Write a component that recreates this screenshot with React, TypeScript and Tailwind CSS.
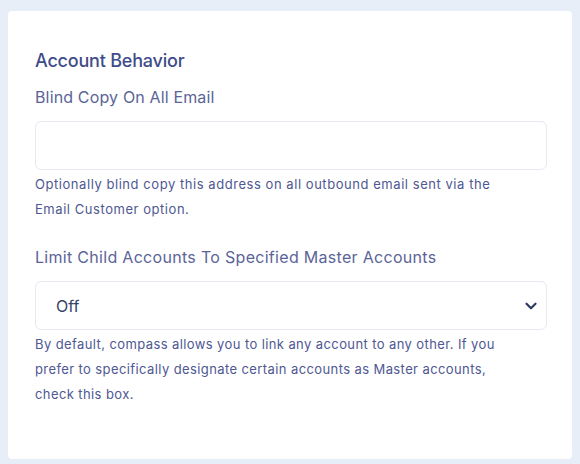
import { ChevronDown } from "lucide-react";

export default function App() {
  return (
    <div className="min-h-[464px] w-[580px] bg-[#e8eef7] px-2 pt-[11px] pb-[9px] font-[Inter,sans-serif]">
      <div className="rounded bg-white pl-[27px] pr-[25px] pt-[38px] pb-[52px]">
        <h2 className="text-[18px] leading-[24px] font-medium tracking-[-0.2px] text-[#404c8a]">Account Behavior</h2>

        {/* Blind copy */}
        <label className="mt-[13px] block text-[16px] leading-[22px] tracking-[0.15px] text-[#5b6497]">
          Blind Copy On All Email
        </label>
        <input
          type="text"
          className="mt-[13px] block h-[49px] w-full rounded-md border border-[#e6e8f2] bg-white px-5 outline-none"
        />
        <p className="mt-[2px] text-[13px] leading-[25px] tracking-[0.55px] text-[#4e5892]">
          Optionally blind copy this address on all outbound email sent via the
          <br />
          Email Customer option.
        </p>

        {/* Limit child accounts */}
        <label className="mt-[24px] block text-[16px] leading-[22px] tracking-[0.3px] text-[#5b6497]">
          Limit Child Accounts To Specified Master Accounts
        </label>
        <div className="mt-[13px] flex h-[49px] w-full items-center justify-between rounded-md border border-[#e6e8f2] pl-5 pr-[6px]">
          <span className="text-[16px] text-[#35416a]">Off</span>
          <ChevronDown className="h-[18px] w-[18px] text-[#2f3d66]" strokeWidth={3} />
        </div>
        <p className="mt-[2px] text-[13px] leading-[25px] tracking-[0.4px] text-[#4e5892]">
          By default, compass allows you to link any account to any other. If you
          <br />
          prefer to specifically designate certain accounts as Master accounts,
          <br />
          check this box.
        </p>
      </div>
    </div>
  );
}
